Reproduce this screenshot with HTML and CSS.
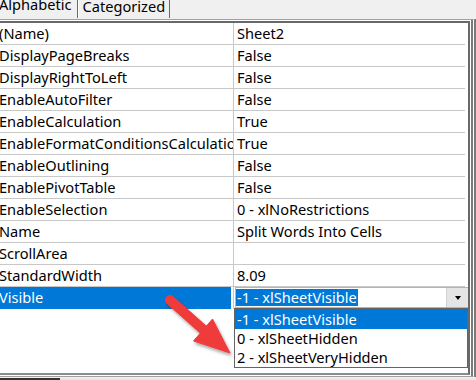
FILE: index.html
```html
<!DOCTYPE html>
<html lang="en">
<head>
    <meta charset="UTF-8">
    <meta name="viewport" content="width=device-width, initial-scale=1.0">
    <title>Properties - Sheet2</title>
    <link rel="stylesheet" href="styles.css">
</head>
<body>
    <!-- Tabs -->
    <div class="tabs">
        <div class="tab active">Alphabetic</div>
        <div class="tab">Categorized</div>
    </div>

    <div class="sheet">
        <div class="grid">
            <div class="row"><div class="name">(Name)</div><div class="value">Sheet2</div></div>
            <div class="row"><div class="name">DisplayPageBreaks</div><div class="value">False</div></div>
            <div class="row"><div class="name">DisplayRightToLeft</div><div class="value">False</div></div>
            <div class="row"><div class="name">EnableAutoFilter</div><div class="value">False</div></div>
            <div class="row"><div class="name">EnableCalculation</div><div class="value">True</div></div>
            <div class="row"><div class="name">EnableFormatConditionsCalculation</div><div class="value">True</div></div>
            <div class="row"><div class="name">EnableOutlining</div><div class="value">False</div></div>
            <div class="row"><div class="name">EnablePivotTable</div><div class="value">False</div></div>
            <div class="row"><div class="name">EnableSelection</div><div class="value">0 - xlNoRestrictions</div></div>
            <div class="row"><div class="name">Name</div><div class="value">Split Words Into Cells</div></div>
            <div class="row"><div class="name">ScrollArea</div><div class="value"></div></div>
            <div class="row"><div class="name">StandardWidth</div><div class="value">8.09</div></div>
            <!-- Selected property with open dropdown -->
            <div class="row selected">
                <div class="name">Visible</div>
                <div class="value">
                    <div class="combo">
                        <span class="combo-text">-1 - xlSheetVisible</span>
                        <span class="combo-btn"><i class="caret"></i></span>
                    </div>
                    <div class="list">
                        <div class="item current">-1 - xlSheetVisible</div>
                        <div class="item">0 - xlSheetHidden</div>
                        <div class="item">2 - xlSheetVeryHidden</div>
                    </div>
                </div>
            </div>
        </div>
    </div>
    <div class="scroll"><div class="thumb"></div></div>

    <!-- Red pointer arrow -->
    <svg class="pointer" width="476" height="380" viewBox="0 0 476 380">
        <defs>
            <filter id="shadow" x="-20%" y="-20%" width="140%" height="140%">
                <feDropShadow dx="1.5" dy="2.5" stdDeviation="1.5" flood-color="#000" flood-opacity="0.35"/>
            </filter>
        </defs>
        <g filter="url(#shadow)" fill="#f03b3b" stroke="#f03b3b">
            <line x1="170" y1="300" x2="206" y2="332" stroke-width="10" stroke-linecap="round"/>
            <polygon points="212.5,319 193.5,341 230,353" stroke-width="1" stroke-linejoin="round"/>
        </g>
    </svg>
</body>
</html>
```

FILE: styles.css
```css
body {
    margin: 0;
    padding: 0;
    width: 476px;
    height: 380px;
    overflow: hidden;
    position: relative;
    background-color: #f0f0f0;
    font-family: "Noto Sans", sans-serif;
    font-size: 14.6px;
    color: #000;
}

/* Tabs */
.tabs {
    display: flex;
    height: 19px;
    overflow: hidden;
}

.tab {
    height: 18px;
    line-height: 13px;
    padding: 0 4px;
    border-left: 1px solid #fff;
    border-right: 1px solid #696969;
    white-space: nowrap;
}

.tab.active {
    line-height: 9px;
    margin-left: -1px;
    padding: 0 5px 0 0;
    border-left: none;
}

/* Property grid frame */
.sheet {
    background-color: #fff;
    border-top: 1px solid #a0a0a0;
    border-right: 5px double #7a7a7a;
    border-bottom: 1px solid #a0a0a0;
    padding: 1px 1px 1px 0;
}

.grid {
    height: 350px;
    background-color: #fff;
    border-top: 2px solid #696969;
    border-right: 2px solid #696969;
    border-bottom: 2px solid #8a8a8a;
}

.row {
    display: grid;
    grid-template-columns: 234px 1fr;
    height: 22px;
    margin-right: 3px;
    border-bottom: 1px solid #c8c8c8;
    box-sizing: border-box;
    line-height: 21px;
}

.name {
    border-right: 1px solid #c8c8c8;
    text-indent: -1px;
    white-space: nowrap;
    overflow: hidden;
}

.value {
    padding-left: 3px;
    white-space: nowrap;
    overflow: hidden;
}

/* Selected row */
.row.selected {
    border-bottom: none;
    margin-right: 0;
}

.row.selected .name {
    background-color: #0078d7;
    color: #fff;
    box-shadow: inset -2px 0 0 #fff;
}

.row.selected .value {
    position: relative;
    overflow: visible;
    padding-left: 1px;
}

.combo {
    display: flex;
    justify-content: space-between;
    height: 21px;
    box-sizing: border-box;
    border: 1px solid #b4b4b4;
    border-right: none;
    background-color: #fff;
}

.combo-text {
    margin-top: 1px;
    padding: 0 1px;
    height: 17px;
    line-height: 17px;
    background-color: #0078d7;
    color: #fff;
}

.combo-btn {
    width: 21px;
    display: flex;
    align-items: center;
    justify-content: center;
    background-color: #e5e5e5;
    border-left: 1px solid #d0d0d0;
}

.caret {
    width: 0;
    height: 0;
    border-left: 3.5px solid transparent;
    border-right: 3.5px solid transparent;
    border-top: 4px solid #000;
}

/* Dropdown list */
.list {
    position: absolute;
    top: 21px;
    left: 0;
    width: 234px;
    box-sizing: border-box;
    border: 1px solid #646464;
    background-color: #fff;
}

.item {
    height: 19px;
    line-height: 19px;
    padding-left: 2px;
}

.item.current {
    height: 20px;
    line-height: 20px;
    background-color: #0078d7;
    color: #fff;
}

/* Bottom strip */
.scroll {
    height: 3px;
    background-color: #e8e8e8;
}

.thumb {
    width: 60px;
    height: 2px;
    margin-top: 1px;
    background-color: #333;
}

.pointer {
    position: absolute;
    top: 0;
    left: 0;
    pointer-events: none;
}
```
